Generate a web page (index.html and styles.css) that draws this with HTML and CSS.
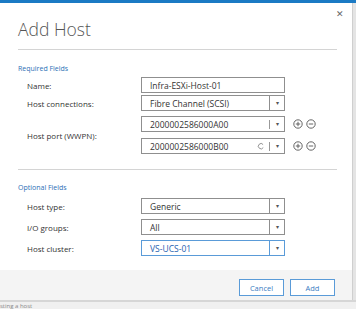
FILE: index.html
```html
<!DOCTYPE html>
<html lang="en">
<head>
  <meta charset="UTF-8" />
  <title>Add Host</title>
  <link rel="stylesheet" href="styles.css">
</head>
<body>

  <div class="dialog">
    <button class="close" aria-label="Close">&#x2715;</button>

    <h1 class="title">Add Host</h1>
    <div class="rule"></div>

    <!-- Required -->
    <div class="section">
      <div class="section-title">Required Fields</div>

      <div class="row row-name">
        <label>Name:</label>
        <div class="field"><span class="value">Infra-ESXi-Host-01</span></div>
      </div>

      <div class="row row-conn">
        <label>Host connections:</label>
        <div class="field select">
          <span class="value">Fibre Channel (SCSI)</span>
          <span class="arrow">&#9662;</span>
        </div>
      </div>

      <div class="row row-ports">
        <label>Host port (WWPN):</label>
        <div class="ports">
          <div class="port">
            <div class="field combo">
              <span class="value">2000002586000A00</span>
              <span class="sep"></span>
              <span class="arrow">&#9662;</span>
            </div>
            <div class="pm">
              <svg viewBox="0 0 10 10"><circle cx="5" cy="5" r="4.2"/><path d="M5 2.8v4.4M2.8 5h4.4"/></svg>
              <svg viewBox="0 0 10 10"><circle cx="5" cy="5" r="4.2"/><path d="M2.8 5h4.4"/></svg>
            </div>
          </div>
          <div class="port">
            <div class="field combo">
              <span class="value">2000002586000B00</span>
              <svg class="spin" viewBox="0 0 10 10"><path d="M7.6 3.2A3.3 3.3 0 1 0 7.8 7"/></svg>
              <span class="sep"></span>
              <span class="arrow">&#9662;</span>
            </div>
            <div class="pm">
              <svg viewBox="0 0 10 10"><circle cx="5" cy="5" r="4.2"/><path d="M5 2.8v4.4M2.8 5h4.4"/></svg>
              <svg viewBox="0 0 10 10"><circle cx="5" cy="5" r="4.2"/><path d="M2.8 5h4.4"/></svg>
            </div>
          </div>
        </div>
      </div>
    </div>

    <div class="rule rule-mid"></div>

    <!-- Optional -->
    <div class="section">
      <div class="section-title opt">Optional Fields</div>

      <div class="row row-opt">
        <label>Host type:</label>
        <div class="field select">
          <span class="value">Generic</span>
          <span class="arrow">&#9662;</span>
        </div>
      </div>

      <div class="row row-opt">
        <label>I/O groups:</label>
        <div class="field select">
          <span class="value">All</span>
          <span class="arrow">&#9662;</span>
        </div>
      </div>

      <div class="row row-opt">
        <label>Host cluster:</label>
        <div class="field select focus">
          <span class="value">VS-UCS-01</span>
          <span class="arrow">&#9662;</span>
        </div>
      </div>
    </div>

    <div class="footer">
      <button class="btn">Cancel</button>
      <button class="btn">Add</button>
    </div>
  </div>

  <div class="status">sting a host</div>

</body>
</html>
```

FILE: styles.css
```css
body {
  margin: 0;
  padding: 0;
  width: 356px;
  height: 309px;
  overflow: hidden;
  background-color: #e4e4e4;
  font-family: 'Open Sans', 'Noto Sans', sans-serif;
  color: #333;
  border-top: 3px solid #1b7ac4;
  box-sizing: border-box;
}

.dialog {
  position: relative;
  width: 352px;
  height: 297px;
  background: white;
  border-right: 1px solid #cfcfcf;
  display: flex;
  flex-direction: column;
}

.close {
  position: absolute;
  top: 6px;
  right: 8px;
  border: none;
  background: none;
  font-size: 9px;
  color: #666;
  padding: 0;
  cursor: pointer;
}

.title {
  margin: 14px 0 0 18px;
  font-size: 17.5px;
  font-weight: 300;
  color: #555;
  line-height: 24px;
}

.rule {
  height: 1px;
  background: #d4d4d4;
  margin: 8px 15px 0 18px;
}

.rule-mid {
  margin-top: 15px;
}

.section {
  padding: 0 0 0 18px;
}

.section-title {
  margin-top: 14px;
  font-size: 7px;
  color: #2b6fb6;
  line-height: 10px;
}

.section-title.opt {
  margin-top: 13px;
}

.row {
  display: flex;
  align-items: center;
  padding-left: 9px;
}

.row label {
  width: 114px;
  font-size: 8px;
  color: #333;
}

.row-name {
  margin-top: 3px;
}

.row-conn {
  margin-top: 2px;
}

.row-ports {
  margin-top: 5px;
}

.row-opt {
  margin-top: 5px;
}

.section .row-opt:nth-child(2) {
  margin-top: 5px;
}

.field {
  width: 144px;
  height: 16px;
  box-sizing: border-box;
  border: 1px solid #8f8f8f;
  display: flex;
  align-items: center;
  font-size: 8.5px;
  color: #333;
  background: white;
}

.field .value {
  flex: 1;
  padding-left: 8px;
  white-space: nowrap;
}

.field .arrow {
  width: 14px;
  align-self: stretch;
  display: flex;
  align-items: center;
  justify-content: center;
  font-size: 6px;
  color: #555;
}

.select .arrow {
  border-left: 1px solid #8f8f8f;
}

.focus {
  border-color: #5a9bd8;
  color: #1f63b0;
}

.focus .arrow {
  border-left-color: #5a9bd8;
}

.ports {
  display: flex;
  flex-direction: column;
  gap: 6px;
}

.port {
  display: flex;
  align-items: center;
}

.combo .sep {
  width: 1px;
  height: 9px;
  background: #999;
}

.spin {
  width: 8px;
  height: 8px;
  margin-right: 4px;
  fill: none;
  stroke: #777;
  stroke-width: 1;
}

.pm {
  display: flex;
  gap: 3px;
  margin-left: 8px;
}

.pm svg {
  width: 10px;
  height: 10px;
  fill: none;
  stroke: #555;
  stroke-width: 0.9;
}

.footer {
  margin-top: auto;
  height: 30px;
  box-sizing: border-box;
  background: #f4f4f4;
  display: flex;
  justify-content: flex-end;
  align-items: flex-start;
  gap: 6px;
  padding: 9px 17px 0 0;
}

.btn {
  width: 45px;
  height: 17px;
  border: 1px solid #5a9bd8;
  background: white;
  color: #3a7cc2;
  font-family: 'Open Sans', 'Noto Sans', sans-serif;
  font-size: 7.5px;
  padding: 0;
  cursor: pointer;
}

.status {
  border-top: 2px solid #d6d6d6;
  font-size: 6px;
  color: #888;
  line-height: 8px;
  background: #f0f0f0;
}
```
